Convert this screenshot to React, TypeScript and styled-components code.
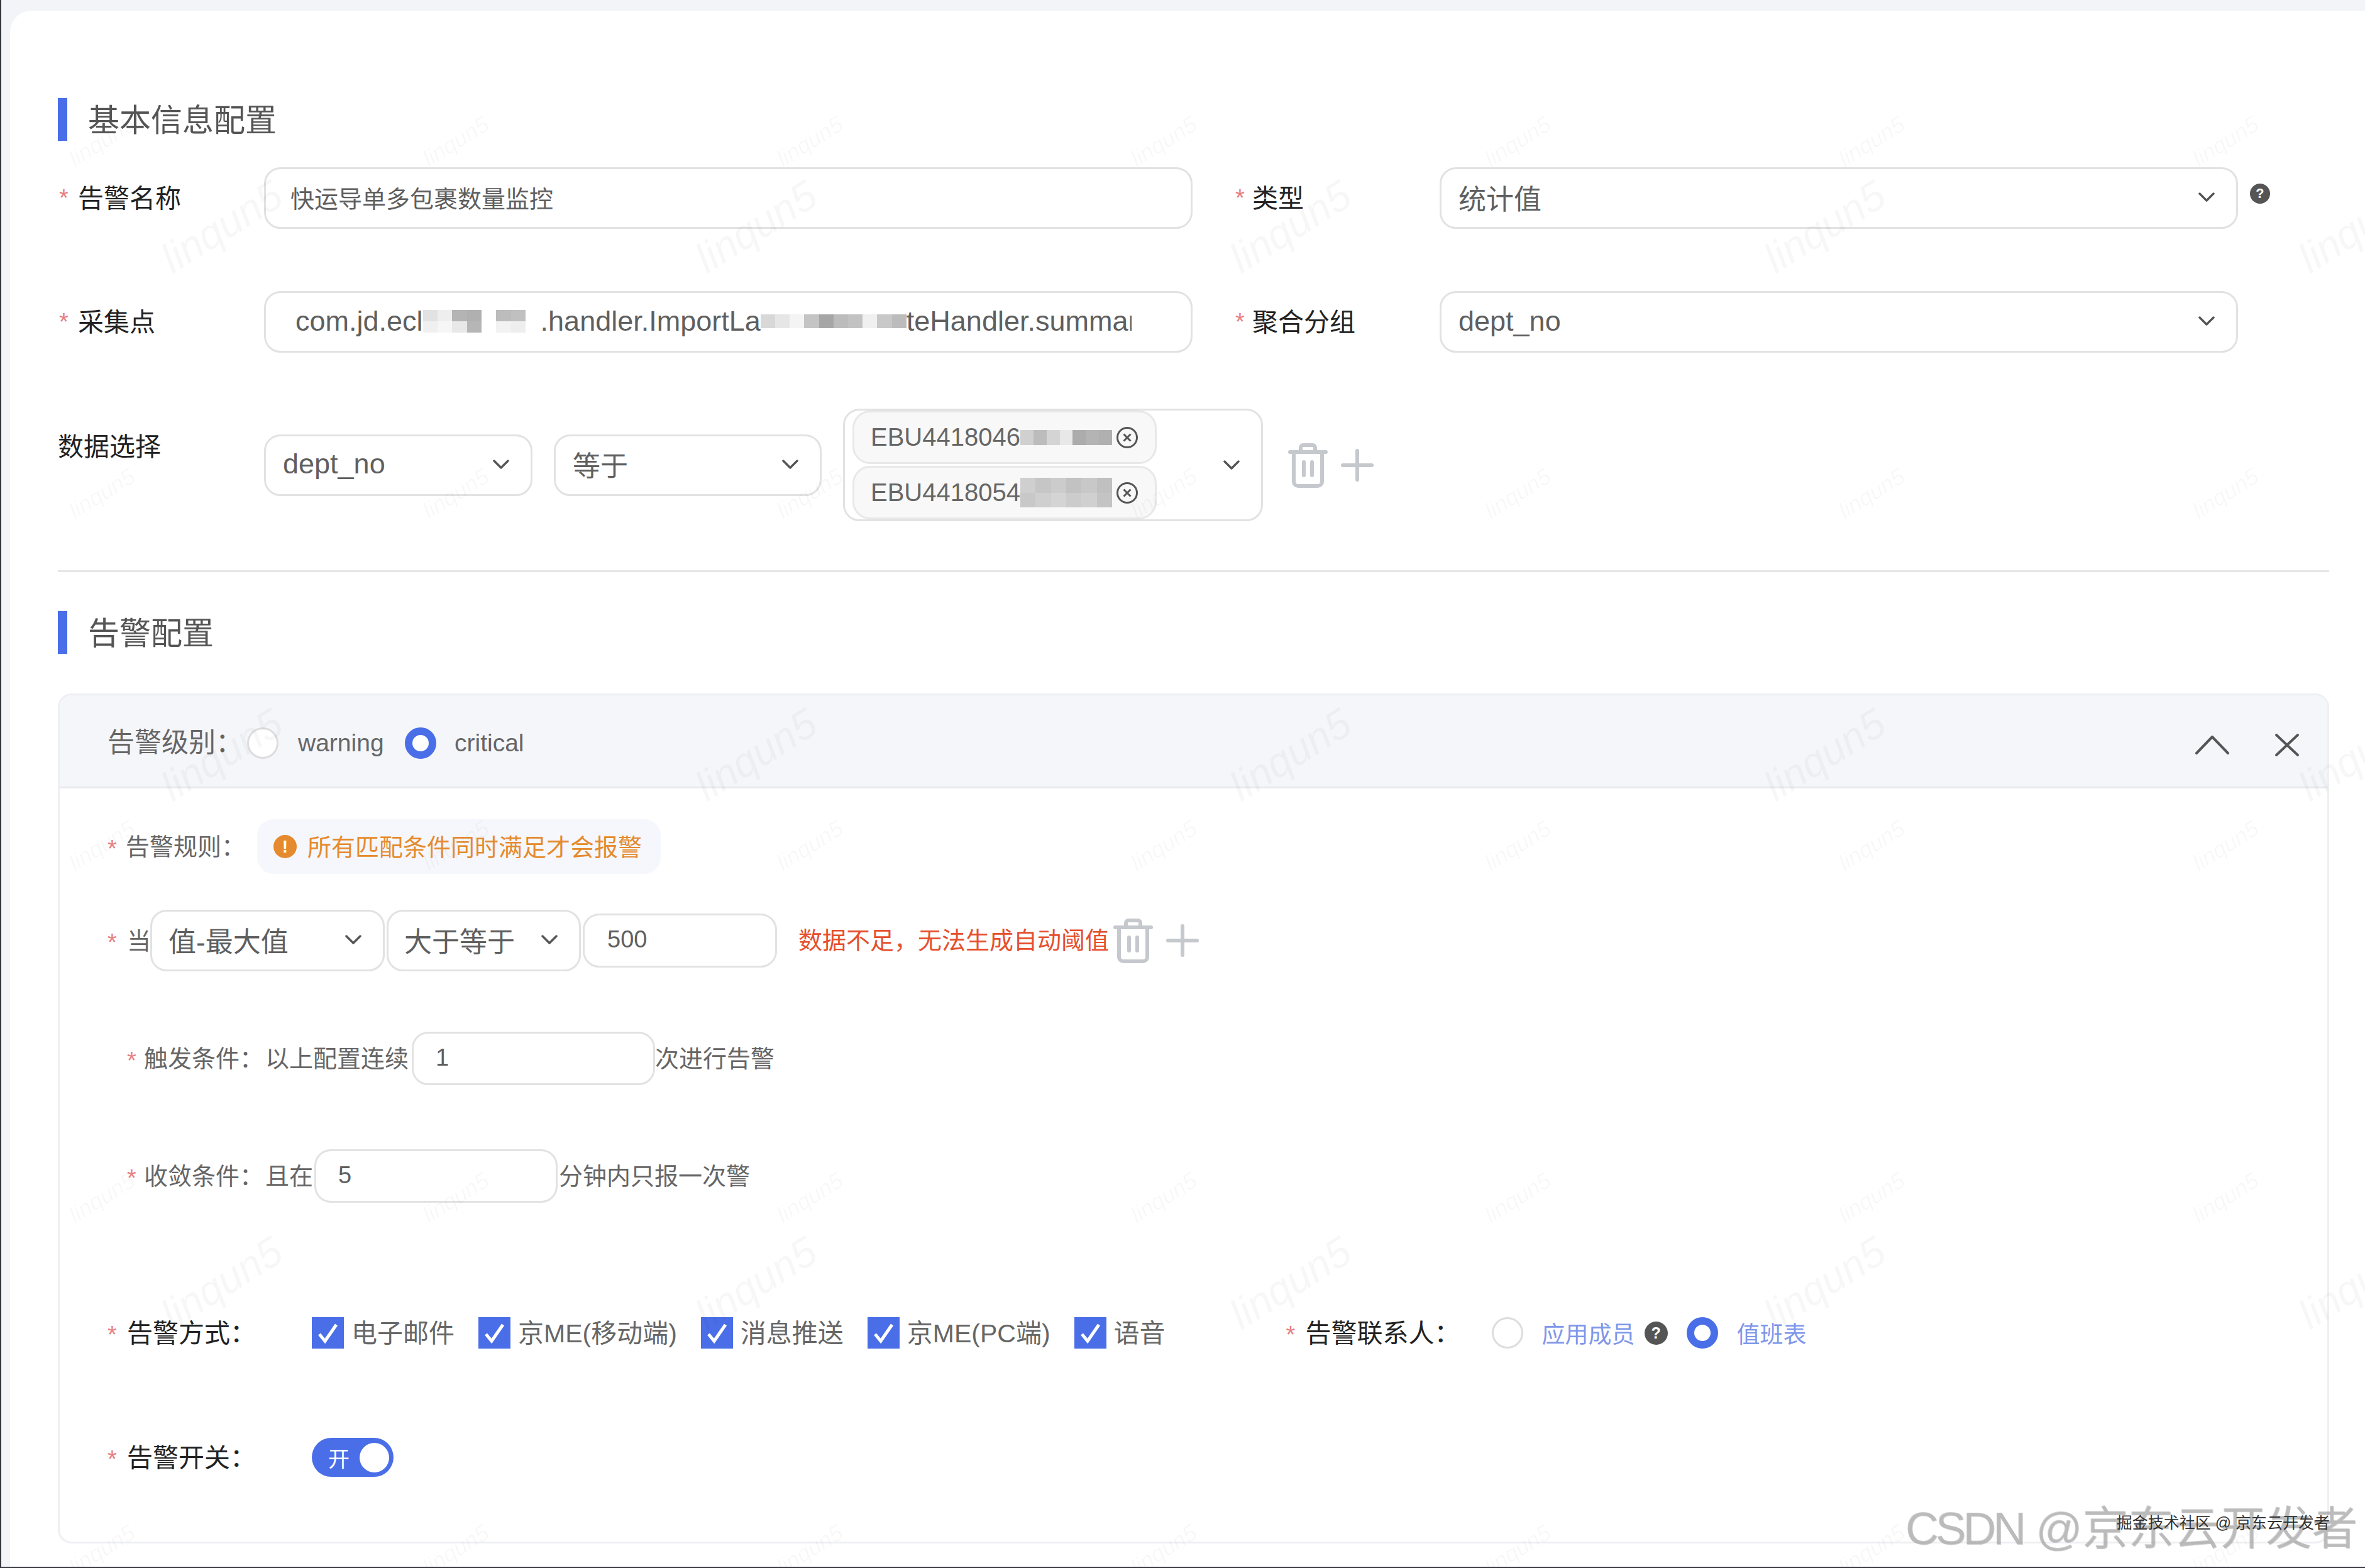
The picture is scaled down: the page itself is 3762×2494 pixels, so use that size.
import React from 'react';
import styled, {createGlobalStyle} from 'styled-components';

const FONT = `"Liberation Sans", "Noto Sans CJK SC", sans-serif`;
const BLUE = '#4a6ee8';

const Global = createGlobalStyle`
  html, body {
    margin: 0;
    padding: 0;
    background: #f3f4f8;
  }
  * { box-sizing: border-box; }
`
const Page = styled.div`
  position: relative;
  width: 3762px;
  height: 2494px;
  overflow: hidden;
  padding: 17px 0 0 14px;
  background: #f3f4f8;
  font-family: ${FONT};
  border-left: 2px solid #34343c;
  border-bottom: 2px solid #3c3c44;
`
const Card = styled.main`
  height: 100%;
  background: #fff;
  border-top-left-radius: 34px;
  padding: 139px 57px 0 76px;
`
const Heading = styled.div<{$top?: number}>`
  display: flex;
  align-items: center;
  height: 68px;
  margin-top: ${p => p.$top ?? 0}px;
  border-left: 15px solid ${BLUE};
  padding: 0 0 6px 33px;
  font-size: 50px;
  color: #555;
`
const FormRow = styled.div<{$top: number}>`
  display: flex;
  align-items: center;
  margin-top: ${p => p.$top}px;
`
const FormLabel = styled.div<{$width: number; $indent?: number}>`
  display: flex;
  align-items: center;
  flex: none;
  width: ${p => p.$width}px;
  padding: 0 0 6px ${p => p.$indent ?? 0}px;
  font-size: 41px;
  color: #222;
`
const TopLabel = styled(FormLabel)`
  align-self: flex-start;
  margin-top: 27px;
`
const Star = styled.span<{$width?: number}>`
  flex: none;
  width: ${p => p.$width ?? 32}px;
  padding-left: 2px;
  font-size: 38px;
  line-height: 34px;
  height: 34px;
  color: #e77f7f;
  transform: translateY(3px);
`
const Field = styled.div<{$width: number; $height?: number; $left?: number; $size?: number}>`
  display: flex;
  align-items: center;
  flex: none;
  overflow: hidden;
  width: ${p => p.$width}px;
  height: ${p => p.$height ?? 98}px;
  padding: 0 0 3px ${p => p.$left ?? 27}px;
  background: #fff;
  border: 3px solid #e2e2e2;
  border-radius: 26px;
  font-size: ${p => p.$size ?? 44}px;
  color: #5f5f5f;
  white-space: nowrap;
`
const Select = styled(Field)<{$gapLeft?: number}>`
  justify-content: space-between;
  padding-right: 34px;
  margin-left: ${p => p.$gapLeft ?? 0}px;
`
const ClipText = styled.div`
  display: flex;
  align-items: center;
  width: 1330px;
  overflow: hidden;
`
const Mosaic = styled.span<{$w: number; $h: number; $cols: number}>`
  display: grid;
  flex: none;
  width: ${p => p.$w}px;
  height: ${p => p.$h}px;
  grid-template-columns: repeat(${p => p.$cols}, 1fr);
  grid-auto-rows: 1fr;
`
const Tile = styled.i<{$c: string}>`
  background: ${p => p.$c};
`
const MultiSelect = styled.div`
  display: flex;
  align-items: center;
  justify-content: space-between;
  flex: none;
  width: 668px;
  height: 179px;
  margin-left: 34px;
  padding: 0 34px 0 12px;
  border: 3px solid #e2e2e2;
  border-radius: 26px;
`
const TagList = styled.div`
  display: flex;
  flex-direction: column;
  gap: 3px;
`
const Tag = styled.div`
  display: flex;
  align-items: center;
  width: 484px;
  height: 85px;
  padding-left: 26px;
  background: #f8f8f8;
  border: 3px solid #e8e8e8;
  border-radius: 28px;
  font-size: 40px;
  color: #666;
`
const CloseBadge = styled.svg`
  flex: none;
  margin-left: 6px;
`
const HelpBadge = styled.span<{$size: number}>`
  display: flex;
  align-items: center;
  justify-content: center;
  flex: none;
  width: ${p => p.$size}px;
  height: ${p => p.$size}px;
  border-radius: 50%;
  background: #555;
  color: #fff;
  font-size: ${p => p.$size * 0.68}px;
  font-weight: 700;
`
const TypeHelp = styled.div`
  margin: -14px 0 0 19px;
`
const Divider = styled.div`
  height: 3px;
  margin-top: 78px;
  background: #e6e6e6;
`
const Panel = styled.section`
  width: 3613px;
  height: 1352px;
  margin-top: 63px;
  border: 3px solid #eeeff2;
  border-radius: 22px;
`
const PanelHeader = styled.header`
  display: flex;
  align-items: center;
  height: 148px;
  padding: 7px 44px 0 76px;
  background: #f5f6fa;
  border-bottom: 3px solid #e9eaee;
  border-radius: 20px 20px 0 0;
  font-size: 39px;
  color: #666;
`
const LevelLabel = styled.span`
  width: 222px;
  font-size: 43px;
  transform: translateY(-5px);
`
const Radio = styled.span<{$on?: boolean}>`
  flex: none;
  width: 50px;
  height: 50px;
  border-radius: 50%;
  background: #fff;
  border: ${p => (p.$on ? `12px solid ${BLUE}` : '3px solid #dddddd')};
`
const RadioText = styled.span<{$left: number; $width?: number; $link?: boolean}>`
  margin-left: ${p => p.$left}px;
  width: ${p => (p.$width ? `${p.$width}px` : 'auto')};
  color: ${p => (p.$link ? '#7f97ea' : 'inherit')};
`
const HeaderActions = styled.div`
  display: flex;
  align-items: center;
  gap: 72px;
  margin: 6px 0 0 auto;
`
const PanelBody = styled.div`
  padding: 49px 0 0 74px;
  font-size: 38px;
  color: #666;
`
const BodyRow = styled.div<{$top?: number; $indent?: number}>`
  display: flex;
  align-items: center;
  margin-top: ${p => p.$top ?? 0}px;
  padding-left: ${p => p.$indent ?? 0}px;
  white-space: nowrap;
`
const RowLabel = styled.span<{$width: number}>`
  flex: none;
  width: ${p => p.$width}px;
  transform: translateY(-3px);
`
const RowText = styled.span`
  flex: none;
  transform: translateY(-3px);
`
const Notice = styled.div`
  display: flex;
  align-items: center;
  height: 87px;
  padding: 0 30px 5px 26px;
  background: #f5f7fc;
  border-radius: 26px;
  color: #e58a2e;
`
const NoticeIcon = styled.span`
  display: flex;
  align-items: center;
  justify-content: center;
  flex: none;
  width: 37px;
  height: 37px;
  margin: 5px 17px 0 0;
  border-radius: 50%;
  background: #e58a2e;
  color: #fff;
  font-size: 28px;
  font-weight: 700;
`
const TightSelect = styled(Select)`
  margin-right: 3px;
`
const ErrorText = styled.span`
  margin: -8px 7px 0 34px;
  color: #e5502e;
`
const Adders = styled.div<{$gap: number; $left?: number}>`
  display: flex;
  align-items: center;
  gap: ${p => p.$gap}px;
  margin-left: ${p => p.$left ?? 0}px;
`
const Gap = styled.span<{$width: number}>`
  flex: none;
  width: ${p => p.$width}px;
`
const OptionRow = styled.div<{$top: number}>`
  display: flex;
  align-items: center;
  margin-top: ${p => p.$top}px;
  font-size: 41px;
  color: #666;
  white-space: nowrap;
`
const OptionLabel = styled.span<{$width: number}>`
  display: flex;
  align-items: center;
  flex: none;
  width: ${p => p.$width}px;
  font-size: 41px;
  color: #222;
`
const Checks = styled.div`
  display: flex;
  align-items: center;
  gap: 38px;
`
const Check = styled.label`
  display: flex;
  align-items: center;
  gap: 12px;
`
const CheckBox = styled.span`
  display: flex;
  flex: none;
  width: 51px;
  height: 50px;
  background: ${BLUE};
`
const ContactGroup = styled.div`
  display: flex;
  align-items: center;
  margin-left: 190px;
  font-size: 37px;
`
const Switch = styled.div`
  display: flex;
  align-items: center;
  justify-content: space-between;
  width: 130px;
  height: 62px;
  padding: 0 7px 0 26px;
  background: ${BLUE};
  border-radius: 31px;
  color: #fff;
  font-size: 34px;
`
const Knob = styled.span`
  width: 47px;
  height: 47px;
  border-radius: 50%;
  background: #fff;
`
const Marks = styled.div<{$x: number; $y: number; $stepX: number; $stepY: number}>`
  position: absolute;
  left: ${p => p.$x}px;
  top: ${p => p.$y}px;
  display: grid;
  grid-template-columns: repeat(7, ${p => p.$stepX}px);
  grid-auto-rows: ${p => p.$stepY}px;
  place-items: center;
  pointer-events: none;
`
const Mark = styled.span<{$size: number; $alpha: number}>`
  font-size: ${p => p.$size}px;
  font-style: italic;
  color: rgba(0, 0, 0, ${p => p.$alpha});
  transform: rotate(-32deg);
`
const CsdnMark = styled.div`
  position: absolute;
  right: 12px;
  bottom: 15px;
  font-size: 73px;
  color: rgba(170, 170, 170, 0.55);
  text-shadow: 1px 1px 0 rgba(120, 120, 120, 0.35);
  white-space: nowrap;
`
const CsdnLatin = styled.span`
  letter-spacing: -5px;
`
const JuejinMark = styled.div`
  position: absolute;
  right: 56px;
  bottom: 54px;
  font-size: 25px;
  color: #333;
  white-space: nowrap;
`

const Chevron = ({up, w = 26, h = 15, sw = 3.5}: {up?: boolean; w?: number; h?: number; sw?: number}) => (
    <svg width={w} height={h} viewBox={`0 0 ${w} ${h}`} fill="none" stroke="#555" strokeWidth={sw}>
        <polyline
            points={up ? `2,${h - 2} ${w / 2},2 ${w - 2},${h - 2}` : `2,2 ${w / 2},${h - 2} ${w - 2},2`}
            strokeLinecap="round" strokeLinejoin="round"/>
    </svg>
);

const Trash = () => (
    <svg width="63" height="72" viewBox="0 0 63 72" fill="none" stroke="#c5c8cd" strokeWidth="6" strokeLinecap="round" strokeLinejoin="round">
        <path d="M3 15H60"/>
        <path d="M20 14V8a4 4 0 0 1 4-4h15a4 4 0 0 1 4 4v6"/>
        <path d="M9 16V62a7 7 0 0 0 7 7h31a7 7 0 0 0 7-7V16"/>
        <path d="M25 31V52M38 31V52"/>
    </svg>
);

const Plus = () => (
    <svg width="52" height="52" viewBox="0 0 52 52" stroke="#c5c8cd" strokeWidth="6" strokeLinecap="round">
        <path d="M3 26H49M26 3V49"/>
    </svg>
);

const CircleClose = () => (
    <CloseBadge width="36" height="36" viewBox="0 0 36 36" fill="none" stroke="#555" strokeWidth="3">
        <circle cx="18" cy="18" r="15.5"/>
        <path d="M12.5 12.5L23.5 23.5M23.5 12.5L12.5 23.5"/>
    </CloseBadge>
);

const Tick = () => (
    <svg width="51" height="50" viewBox="0 0 51 50" fill="none" stroke="#fff" strokeWidth="5">
        <path d="M12 27L21 38L39 12"/>
    </svg>
);

const Blur = ({w, h, cols, tiles}: {w: number; h: number; cols: number; tiles: string[]}) => (
    <Mosaic $w={w} $h={h} $cols={cols}>
        {tiles.map((c, i) => <Tile key={i} $c={c}/>)}
    </Mosaic>
);

const Required = ({children, width}: {children: React.ReactNode; width?: number}) => (
    <><Star $width={width}>*</Star>{children}</>
);

const blurA = ['#e2e2e2', '#eeeeee', '#b4b4b4', '#b0b0b0', '#fff', '#bcbcbc', '#c0c0c0', '#fff',
    '#f0f0f0', '#f6f6f6', '#e8e8e8', '#b6b6b6', '#fff', '#f2f2f2', '#eeeeee', '#fff'];
const blurB = ['#d8d8d8', '#e6e6e6', '#f4f4f4', '#c4c4c4', '#a6a6a6', '#bcbcbc', '#c2c2c2', '#f0f0f0', '#c8c8c8', '#bcbcbc'];
const blurC = ['#d0d0d0', '#bcbcbc', '#d4d4d4', '#e8e8e8', '#acacac', '#b4b4b4', '#b0b0b0'];
const blurD = ['#cfcfcf', '#c6c6c6', '#cccccc', '#c2c2c2', '#c8c8c8', '#c0c0c0',
    '#c8c8c8', '#cfcfcf', '#d4d4d4', '#cccccc', '#d0d0d0', '#c4c4c4'];

const channels = ['电子邮件', '京ME(移动端)', '消息推送', '京ME(PC端)', '语音'];

const App = () => {
    const smallMarks = Array.from({length: 35});
    const bigMarks = Array.from({length: 21});
    return (
        <Page>
            <Global/>
            <Card>
                <Heading>基本信息配置</Heading>
                <FormRow $top={42}>
                    <FormLabel $width={328}><Required>告警名称</Required></FormLabel>
                    <Field $width={1477} $left={39} $size={38}>快运导单多包裹数量监控</Field>
                    <FormLabel $width={393} $indent={66}><Required width={29}>类型</Required></FormLabel>
                    <Select $width={1270}>统计值<Chevron/></Select>
                    <TypeHelp><HelpBadge $size={32}>?</HelpBadge></TypeHelp>
                </FormRow>
                <FormRow $top={99}>
                    <FormLabel $width={328}><Required>采集点</Required></FormLabel>
                    <Field $width={1477} $left={47} $size={45}>
                        <ClipText>
                            com.jd.ecl
                            <Blur w={187} h={36} cols={8} tiles={blurA}/>
                            .handler.ImportLa
                            <Blur w={232} h={22} cols={10} tiles={blurB}/>
                            teHandler.summar
                        </ClipText>
                    </Field>
                    <FormLabel $width={393} $indent={66}><Required width={29}>聚合分组</Required></FormLabel>
                    <Select $width={1270} $size={45}>dept_no<Chevron/></Select>
                </FormRow>
                <FormRow $top={89}>
                    <TopLabel $width={328}>数据选择</TopLabel>
                    <Select $width={427} $size={45}>dept_no<Chevron/></Select>
                    <Select $width={426} $gapLeft={34}>等于<Chevron/></Select>
                    <MultiSelect>
                        <TagList>
                            <Tag>EBU4418046<Blur w={146} h={24} cols={7} tiles={blurC}/><CircleClose/></Tag>
                            <Tag>EBU4418054<Blur w={146} h={47} cols={6} tiles={blurD}/><CircleClose/></Tag>
                        </TagList>
                        <Chevron/>
                    </MultiSelect>
                    <Adders $gap={21} $left={40}><Trash/><Plus/></Adders>
                </FormRow>
                <Divider/>
                <Heading $top={62}>告警配置</Heading>
                <Panel>
                    <PanelHeader>
                        <LevelLabel>告警级别：</LevelLabel>
                        <Radio/>
                        <RadioText $left={31} $width={170}>warning</RadioText>
                        <Radio $on/>
                        <RadioText $left={29}>critical</RadioText>
                        <HeaderActions>
                            <Chevron up w={54} h={30} sw={4}/>
                            <svg width="40" height="38" viewBox="0 0 40 38" stroke="#555" strokeWidth="4" strokeLinecap="round">
                                <path d="M3 3L37 35M37 3L3 35"/>
                            </svg>
                        </HeaderActions>
                    </PanelHeader>
                    <PanelBody>
                        <BodyRow>
                            <Required width={31}><RowLabel $width={209}>告警规则：</RowLabel></Required>
                            <Notice><NoticeIcon>!</NoticeIcon>所有匹配条件同时满足才会报警</Notice>
                        </BodyRow>
                        <BodyRow $top={57}>
                            <Required width={33}><RowLabel $width={37}>当</RowLabel></Required>
                            <TightSelect $width={373} $left={26}>值-最大值<Chevron/></TightSelect>
                            <TightSelect $width={309} $left={25}>大于等于<Chevron/></TightSelect>
                            <Field $width={309} $height={86} $left={36} $size={38}>500</Field>
                            <ErrorText>数据不足，无法生成自动阈值</ErrorText>
                            <Adders $gap={21}><Trash/><Plus/></Adders>
                        </BodyRow>
                        <BodyRow $top={96} $indent={31}>
                            <Required width={29}><RowLabel $width={193}>触发条件：</RowLabel></Required>
                            <RowText>以上配置连续</RowText><Gap $width={5}/>
                            <Field $width={387} $height={85} $left={35} $size={38}>1</Field>
                            <RowText>次进行告警</RowText>
                        </BodyRow>
                        <BodyRow $top={102} $indent={31}>
                            <Required width={29}><RowLabel $width={193}>收敛条件：</RowLabel></Required>
                            <RowText>且在</RowText><Gap $width={2}/>
                            <Field $width={387} $height={85} $left={35} $size={38}>5</Field>
                            <Gap $width={2}/><RowText>分钟内只报一次警</RowText>
                        </BodyRow>
                        <OptionRow $top={177}>
                            <OptionLabel $width={327}><Required width={33}><RowText>告警方式：</RowText></Required></OptionLabel>
                            <Checks>
                                {channels.map(name => (
                                    <Check key={name}><CheckBox><Tick/></CheckBox><RowText>{name}</RowText></Check>
                                ))}
                            </Checks>
                            <ContactGroup>
                                <OptionLabel $width={329}>
                                    <Required width={33}><RowText>告警联系人：</RowText></Required>
                                </OptionLabel>
                                <Radio/>
                                <RadioText $left={30} $link>应用成员</RadioText>
                                <Adders $gap={0} $left={15}><HelpBadge $size={37}>?</HelpBadge></Adders>
                                <Adders $gap={0} $left={30}><Radio $on/></Adders>
                                <RadioText $left={30} $link>值班表</RadioText>
                            </ContactGroup>
                        </OptionRow>
                        <OptionRow $top={137}>
                            <OptionLabel $width={327}><Required width={33}><RowText>告警开关：</RowText></Required></OptionLabel>
                            <Switch>开<Knob/></Switch>
                        </OptionRow>
                    </PanelBody>
                </Panel>
            </Card>
            <Marks $x={-121} $y={-55} $stepX={563} $stepY={560}>
                {smallMarks.map((_, i) => <Mark key={i} $size={36} $alpha={0.03}>linqun5</Mark>)}
            </Marks>
            <Marks $x={-75} $y={-60} $stepX={850} $stepY={840}>
                {bigMarks.map((_, i) => <Mark key={i} $size={66} $alpha={0.03}>linqun5</Mark>)}
            </Marks>
            <CsdnMark><CsdnLatin>CSDN</CsdnLatin> @京东云开发者</CsdnMark>
            <JuejinMark>掘金技术社区 @ 京东云开发者</JuejinMark>
        </Page>
    );
};

export default App;
